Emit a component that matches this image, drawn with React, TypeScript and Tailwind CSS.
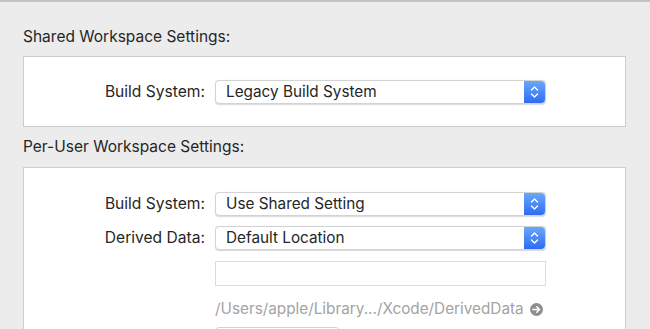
import React from 'react';

const font = { fontFamily: 'Inter, "Liberation Sans", sans-serif' };

function Stepper() {
  return (
    <div className="flex h-full w-[21px] shrink-0 items-center justify-center rounded-r-[4px] bg-gradient-to-b from-[#6aa6fb] to-[#2e6cf2]">
      <svg width="9" height="14" viewBox="0 0 9 14" fill="none">
        <path d="M1.5 5 L4.5 2 L7.5 5" stroke="white" strokeWidth="1.4" strokeLinecap="round" strokeLinejoin="round" />
        <path d="M1.5 9 L4.5 12 L7.5 9" stroke="white" strokeWidth="1.4" strokeLinecap="round" strokeLinejoin="round" />
      </svg>
    </div>
  );
}

function Popup({ value }: { value: string }) {
  return (
    <div className="flex h-[24px] w-[331px] shrink-0 items-center rounded-[4px] border border-[#d3d3d3] bg-white shadow-[0_0.5px_1px_rgba(0,0,0,0.15)]">
      <span className="flex-1 pl-[10px] text-[15.3px] text-[#262626]">{value}</span>
      <Stepper />
    </div>
  );
}

function Row({ label, value }: { label: string; value: string }) {
  return (
    <div className="flex items-center">
      <div className="w-[191px] shrink-0 pr-[10px] text-right text-[15.6px] text-[#262626]">{label}</div>
      <Popup value={value} />
    </div>
  );
}

export default function App() {
  return (
    <div
      className="flex h-[329px] w-[650px] flex-col overflow-hidden border-t-2 border-[#c2c2c2] bg-[#ececec] pl-[23px] pr-[24px]"
      style={font}
    >
      <div className="mt-[25px] h-[20px] shrink-0 text-[15.5px] leading-[20px] text-[#262626]">Shared Workspace Settings:</div>

      <div className="mt-[9px] flex h-[71px] shrink-0 flex-col border border-[#cdcdcd] bg-white pt-[23px]">
        <Row label="Build System:" value="Legacy Build System" />
      </div>

      <div className="mt-[10px] h-[20px] shrink-0 text-[15.5px] leading-[20px] text-[#262626]">Per-User Workspace Settings:</div>

      <div className="mt-[10px] flex flex-1 flex-col border border-b-0 border-[#cdcdcd] bg-white pt-[24px]">
        <div className="flex flex-col gap-[10px]">
          <Row label="Build System:" value="Use Shared Setting" />
          <Row label="Derived Data:" value="Default Location" />
        </div>
        <div className="ml-[191px] mt-[11px] h-[25px] w-[331px] shrink-0 border border-[#dcdcdc] bg-white" />
        <div className="ml-[191px] mt-[13px] flex h-[20px] shrink-0 items-center gap-[6px] text-[15.3px] text-[#a3a3a3]">
          <span>/Users/apple/Library.../Xcode/DerivedData</span>
          <svg width="13" height="13" viewBox="0 0 13 13">
            <circle cx="6.5" cy="6.5" r="6.5" fill="#8e8e8e" />
            <path d="M3 6.5 H9.5 M6.8 3.8 L9.5 6.5 L6.8 9.2" stroke="white" strokeWidth="1.6" fill="none" strokeLinecap="round" strokeLinejoin="round" />
          </svg>
        </div>
        <div className="ml-[191px] mt-[8px] h-[24px] w-[125px] shrink-0 rounded-[4px] border border-[#d3d3d3] bg-white" />
      </div>
    </div>
  );
}
